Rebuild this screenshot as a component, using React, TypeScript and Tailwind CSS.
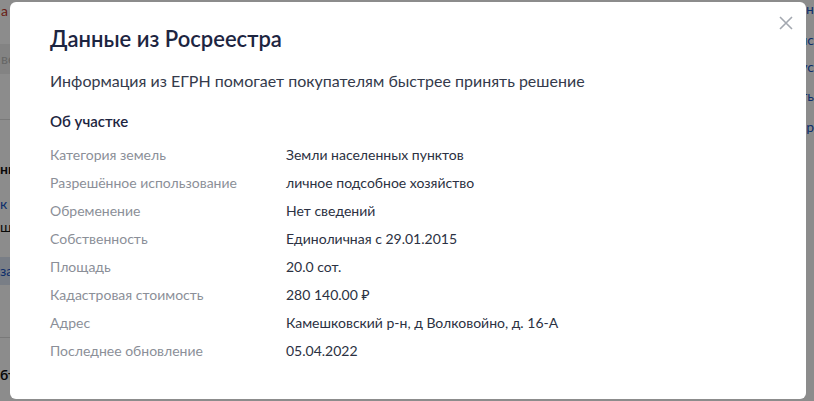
import React from "react";

const rows: [string, string][] = [
  ["Категория земель", "Земли населенных пунктов"],
  ["Разрешённое использование", "личное подсобное хозяйство"],
  ["Обременение", "Нет сведений"],
  ["Собственность", "Единоличная с 29.01.2015"],
  ["Площадь", "20.0 сот."],
  ["Кадастровая стоимость", "280 140.00 ₽"],
  ["Адрес", "Камешковский р-н, д Волковойно, д. 16-А"],
  ["Последнее обновление", "05.04.2022"],
];

export default function App() {
  return (
    <div className="relative w-[814px] h-[401px] overflow-hidden bg-white font-['Lato','Noto_Sans',sans-serif]">
      {/* page behind the modal */}
      <div className="flex justify-between h-full">
        <div className="w-[60px] flex flex-col text-[14px]">
          <div className="h-[24px] pl-[1px] text-[#c0392b]">а</div>
          <div className="mt-[20px] h-[30px] bg-[#eeeeee] text-[#bbbbbb] pl-[1px] leading-[30px]">ве</div>
          <div className="mt-[45px] border-t border-[#dddddd]" />
          <div className="mt-[38px] font-bold text-[#111111]">ни</div>
          <div className="mt-[14px] text-[#1a56c4]">к</div>
          <div className="mt-[2px] text-[#111111]">ш</div>
          <div className="mt-[20px] h-[28px] bg-[#dde6f5] text-[#1a56c4] leading-[28px]">за</div>
          <div className="mt-[52px] border-t border-[#dddddd]" />
          <div className="mt-[26px] font-bold text-[#111111]">бъ</div>
        </div>
        <div className="w-[60px] flex flex-col items-end text-[14px] text-[#1a56c4]">
          <div className="mt-[-2px]">ен</div>
          <div className="mt-[10px]">ис</div>
          <div className="mt-[6px]">ус</div>
          <div className="mt-[8px]">ть</div>
          <div className="mt-[10px]">р</div>
        </div>
      </div>

      {/* overlay */}
      <div className="absolute inset-0 bg-black/45" />

      {/* modal */}
      <div className="absolute left-[10px] top-[2px] w-[796px] h-[397px] bg-white rounded-[6px] pl-[40px] pt-[23px]">
        <button className="absolute right-[12px] top-[13px] w-[16px] h-[16px] text-[#a3a8b0]">
          <svg viewBox="0 0 16 16" width="16" height="16" fill="none" stroke="currentColor" strokeWidth="1.6">
            <path d="M2 2L14 14M14 2L2 14" />
          </svg>
        </button>
        <h2 className="text-[22px] leading-[28px] font-semibold text-[#1d2541]">Данные из Росреестра</h2>
        <p className="mt-[16px] text-[16px] leading-[24px] text-[#343a4b]">
          Информация из ЕГРН помогает покупателям быстрее принять решение
        </p>
        <h3 className="mt-[18px] text-[15px] leading-[20px] font-semibold text-[#1d2541]">Об участке</h3>
        <div className="mt-[9px] flex flex-col">
          {rows.map(([k, v]) => (
            <div key={k} className="flex h-[28px] items-center text-[14px]">
              <div className="w-[236px] text-[#8b8f98]">{k}</div>
              <div className="text-[#2b3142]">{v}</div>
            </div>
          ))}
        </div>
      </div>
    </div>
  );
}
